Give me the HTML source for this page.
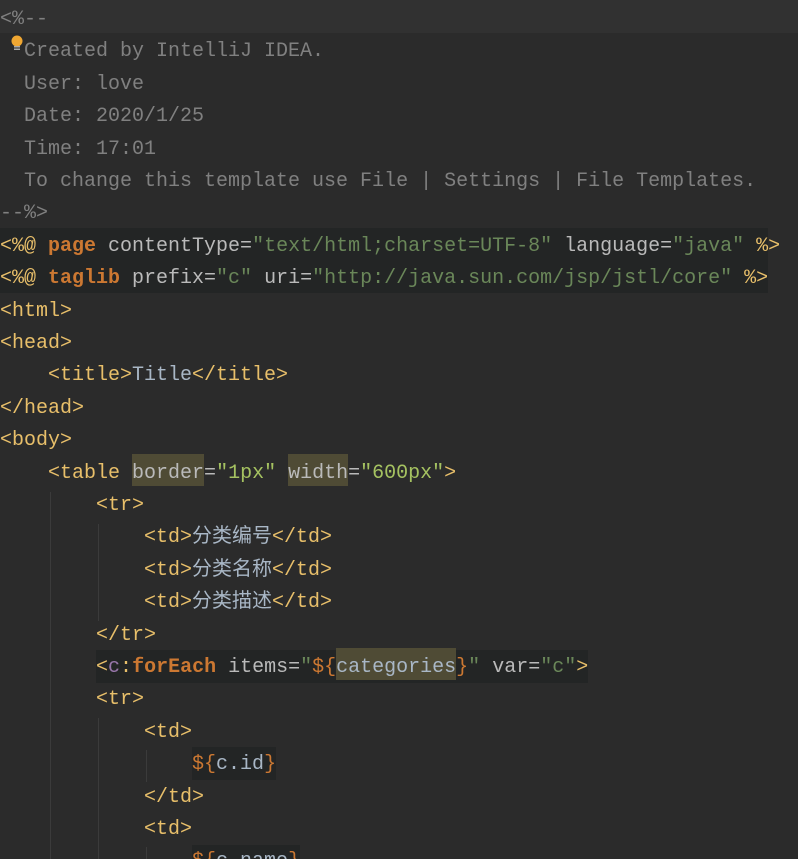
<!DOCTYPE html>
<html><head><meta charset="utf-8"><style>
html,body{margin:0;padding:0;background:#2b2b2b;width:798px;height:859px;overflow:hidden}
#ed{position:relative;font-family:"Liberation Mono","Noto Sans CJK SC",monospace;font-size:20px;color:#a9b7c6}
.l{position:absolute;left:0;height:32.4px;line-height:32.4px;white-space:pre;margin-top:4px}
.c{color:#808080}.t{color:#e8bf6a}.a{color:#bababa}.s{color:#6a8759}.s2{color:#a5c261}
.k{color:#cc7832;font-weight:bold}.o{color:#cc7832}.p{color:#9876aa}
.h{display:inline-block;height:32.4px;background:#4f4b35;vertical-align:top;margin-top:-4px;line-height:40px}
.bg{position:absolute;background:#232525}
.g{position:absolute;width:1px;background:#3b3b3b}
</style></head><body><div id="ed">
<div class="bg" style="left:0;top:0;width:798px;height:33px;background:#313131"></div>
<div class="bg" style="left:0;top:228px;width:768px;height:65px"></div>
<div class="bg" style="left:96px;top:650px;width:492px;height:33px"></div>
<div class="bg" style="left:192px;top:747px;width:84px;height:33px"></div>
<div class="bg" style="left:192px;top:845px;width:108px;height:20px"></div>
<div class="g" style="left:50px;top:492px;height:369px"></div>
<div class="g" style="left:98px;top:524px;height:97px"></div>
<div class="g" style="left:98px;top:718px;height:143px"></div>
<div class="g" style="left:146px;top:750px;height:32px"></div>
<div class="g" style="left:146px;top:847px;height:14px"></div>
<svg style="position:absolute;left:10px;top:35px" width="14" height="18" viewBox="0 0 14 18"><circle cx="7" cy="6" r="5.5" fill="#f0a732"/><rect x="4" y="11" width="6" height="1.5" fill="#aaa"/><rect x="4" y="13.5" width="6" height="1.5" fill="#aaa"/></svg>
<div class="l c" style="top:0">&lt;%--</div>
<div class="l c" style="top:32.4px">  Created by IntelliJ IDEA.</div>
<div class="l c" style="top:64.8px">  User: love</div>
<div class="l c" style="top:97.2px">  Date: 2020/1/25</div>
<div class="l c" style="top:129.6px">  Time: 17:01</div>
<div class="l c" style="top:162px">  To change this template use File | Settings | File Templates.</div>
<div class="l c" style="top:194.4px">--%&gt;</div>
<div class="l" style="top:226.8px"><span class="t">&lt;%@ </span><span class="k">page </span><span class="a">contentType=</span><span class="s">"text/html;charset=UTF-8" </span><span class="a">language=</span><span class="s">"java" </span><span class="t">%&gt;</span></div>
<div class="l" style="top:259.2px"><span class="t">&lt;%@ </span><span class="k">taglib </span><span class="a">prefix=</span><span class="s">"c" </span><span class="a">uri=</span><span class="s">"http://java.sun.com/jsp/jstl/core" </span><span class="t">%&gt;</span></div>
<div class="l t" style="top:291.6px">&lt;html&gt;</div>
<div class="l t" style="top:324px">&lt;head&gt;</div>
<div class="l" style="top:356.4px">    <span class="t">&lt;title&gt;</span>Title<span class="t">&lt;/title&gt;</span></div>
<div class="l t" style="top:388.8px">&lt;/head&gt;</div>
<div class="l t" style="top:421.2px">&lt;body&gt;</div>
<div class="l" style="top:453.6px">    <span class="t">&lt;table </span><span class="a h">border</span><span class="a">=</span><span class="s2">"1px" </span><span class="a h">width</span><span class="a">=</span><span class="s2">"600px"</span><span class="t">&gt;</span></div>
<div class="l t" style="top:486px">        &lt;tr&gt;</div>
<div class="l" style="top:518.4px">            <span class="t">&lt;td&gt;</span>分类编号<span class="t">&lt;/td&gt;</span></div>
<div class="l" style="top:550.8px">            <span class="t">&lt;td&gt;</span>分类名称<span class="t">&lt;/td&gt;</span></div>
<div class="l" style="top:583.2px">            <span class="t">&lt;td&gt;</span>分类描述<span class="t">&lt;/td&gt;</span></div>
<div class="l t" style="top:615.6px">        &lt;/tr&gt;</div>
<div class="l" style="top:648px">        <span class="t">&lt;</span><span class="p">c</span><span class="t">:</span><span class="k">forEach </span><span class="a">items=</span><span class="s">"</span><span class="o">${</span><span class="h">categories</span><span class="o">}</span><span class="s">" </span><span class="a">var=</span><span class="s">"c"</span><span class="t">&gt;</span></div>
<div class="l t" style="top:680.4px">        &lt;tr&gt;</div>
<div class="l t" style="top:712.8px">            &lt;td&gt;</div>
<div class="l" style="top:745.2px">                <span class="o">${</span>c.id<span class="o">}</span></div>
<div class="l t" style="top:777.6px">            &lt;/td&gt;</div>
<div class="l t" style="top:810px">            &lt;td&gt;</div>
<div class="l" style="top:842.4px">                <span class="o">${</span>c.name<span class="o">}</span></div>
</div></body></html>
